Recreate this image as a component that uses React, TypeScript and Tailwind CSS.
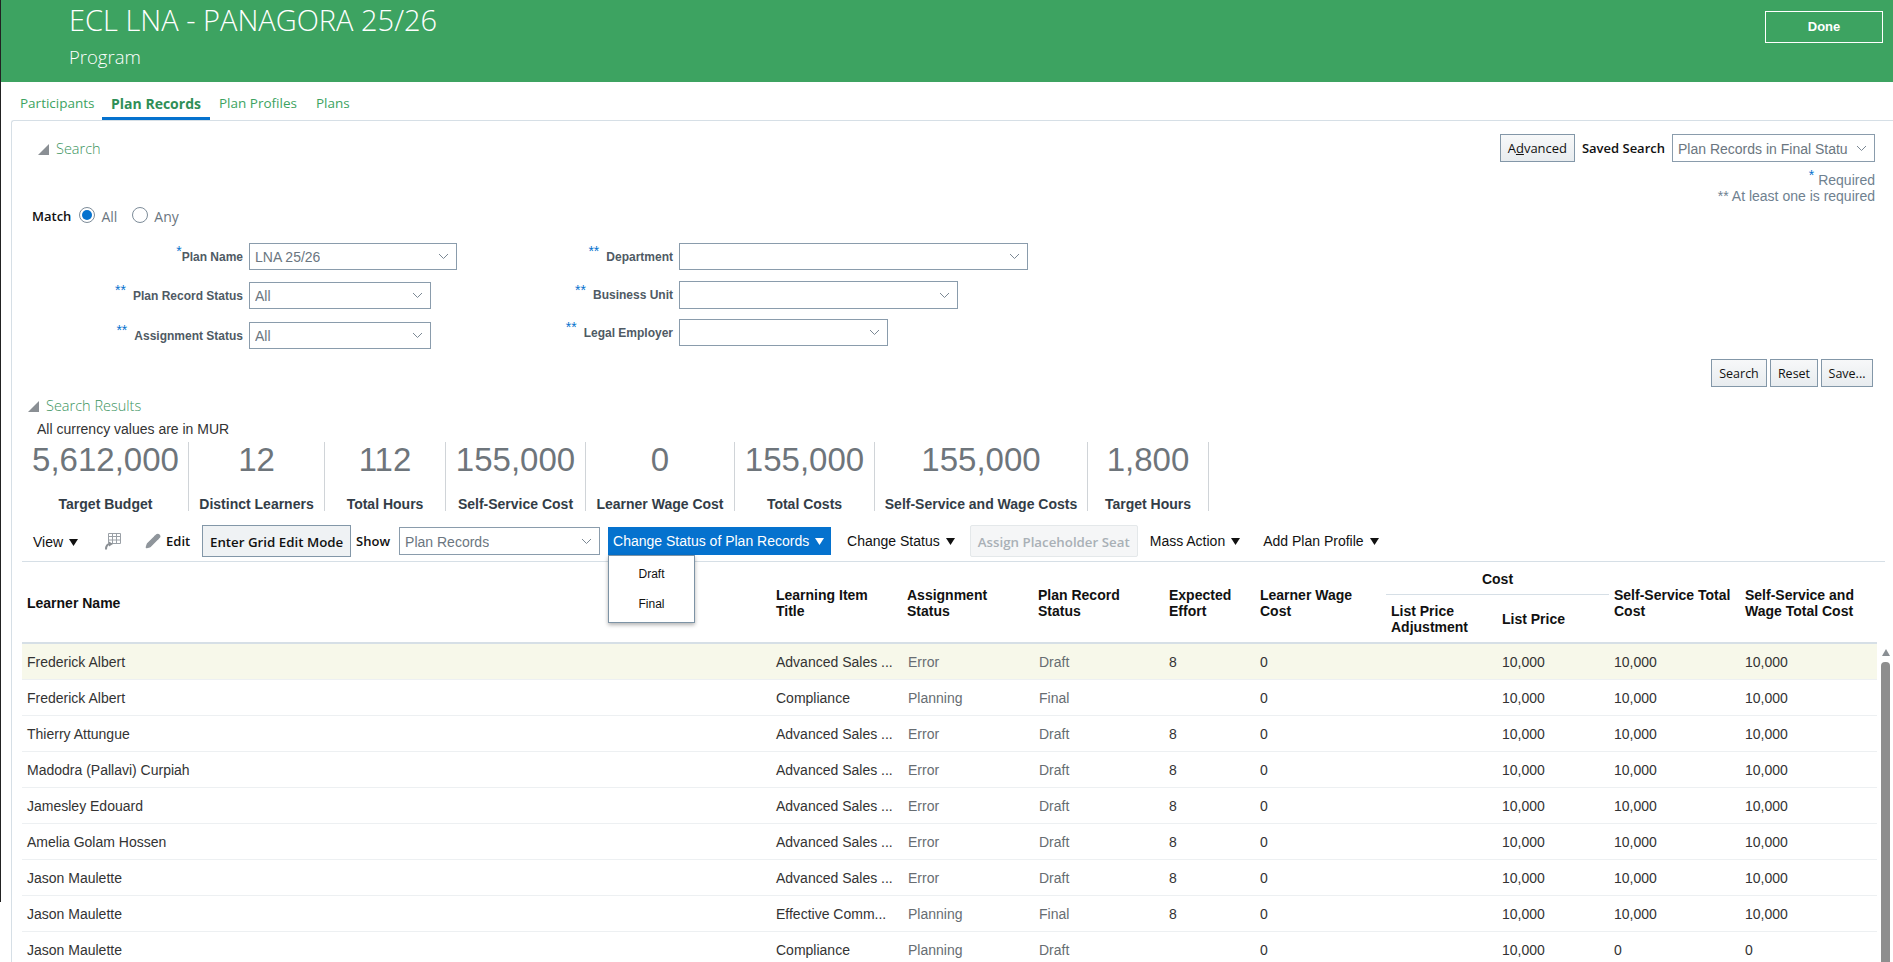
import { Pencil } from 'lucide-react';

type Row = {
  name: string;
  item: string;
  assign: string;
  status: string;
  effort: string;
  selfCost: string;
  wageCost: string;
};

const sales = 'Advanced Sales ...';

const rows: Row[] = [
  { name: 'Frederick Albert', item: sales, assign: 'Error', status: 'Draft', effort: '8', selfCost: '10,000', wageCost: '10,000' },
  { name: 'Frederick Albert', item: 'Compliance', assign: 'Planning', status: 'Final', effort: '', selfCost: '10,000', wageCost: '10,000' },
  { name: 'Thierry Attungue', item: sales, assign: 'Error', status: 'Draft', effort: '8', selfCost: '10,000', wageCost: '10,000' },
  { name: 'Madodra (Pallavi) Curpiah', item: sales, assign: 'Error', status: 'Draft', effort: '8', selfCost: '10,000', wageCost: '10,000' },
  { name: 'Jamesley Edouard', item: sales, assign: 'Error', status: 'Draft', effort: '8', selfCost: '10,000', wageCost: '10,000' },
  { name: 'Amelia Golam Hossen', item: sales, assign: 'Error', status: 'Draft', effort: '8', selfCost: '10,000', wageCost: '10,000' },
  { name: 'Jason Maulette', item: sales, assign: 'Error', status: 'Draft', effort: '8', selfCost: '10,000', wageCost: '10,000' },
  { name: 'Jason Maulette', item: 'Effective Comm...', assign: 'Planning', status: 'Final', effort: '8', selfCost: '10,000', wageCost: '10,000' },
  { name: 'Jason Maulette', item: 'Compliance', assign: 'Planning', status: 'Draft', effort: '', selfCost: '0', wageCost: '0' },
];

const metrics = [
  { value: '5,612,000', label: 'Target Budget', width: 'w-[166px]' },
  { value: '12', label: 'Distinct Learners', width: 'w-[136px]' },
  { value: '112', label: 'Total Hours', width: 'w-[121px]' },
  { value: '155,000', label: 'Self-Service Cost', width: 'w-[140px]' },
  { value: '0', label: 'Learner Wage Cost', width: 'w-[149px]' },
  { value: '155,000', label: 'Total Costs', width: 'w-[140px]' },
  { value: '155,000', label: 'Self-Service and Wage Costs', width: 'w-[213px]' },
  { value: '1,800', label: 'Target Hours', width: 'w-[121px]' },
];

function Chevron() {
  return (
    <svg width="11" height="7" viewBox="0 0 11 7" className="shrink-0" fill="none" stroke="#7b8894" strokeWidth="1">
      <path d="M1 1l4.5 4.5L10 1" />
    </svg>
  );
}

function Caret({ color = '#111' }: { color?: string }) {
  return (
    <svg width="9" height="7" viewBox="0 0 9 7" className="ml-[6px] shrink-0">
      <path d="M0 0h9L4.5 7z" fill={color} />
    </svg>
  );
}

function Disclosure() {
  return (
    <svg width="11" height="11" viewBox="0 0 11 11" className="shrink-0">
      <path d="M11 0v11H0z" fill="#8a8f94" />
    </svg>
  );
}

function Select({ value, width, height = 'h-[28px]' }: { value: string; width: string; height?: string }) {
  return (
    <div className={`flex ${width} ${height} shrink-0 items-center justify-between border border-[#8a9cac] bg-white pl-[5px] pr-[7px] text-[14px] text-[#6b7680]`}>
      <span className="mr-[8px] overflow-hidden whitespace-nowrap pt-[2px]">{value}</span>
      <Chevron />
    </div>
  );
}

function Marks({ count }: { count: 1 | 2 }) {
  return <span className="relative top-[-5px] text-[14px] font-normal text-[#0572ce]">{count === 1 ? '*' : '**'}</span>;
}

function FormRow({ label, marks, gap, children, className }: { label: string; marks: 1 | 2; gap: string; children: React.ReactNode; className: string }) {
  return (
    <div className={`flex items-center justify-end ${className}`}>
      <Marks count={marks} />
      <span className={`${gap} whitespace-nowrap text-[12px] font-bold text-[#4f5a64]`}>{label}</span>
      <span className="w-[6px] shrink-0" />
      {children}
    </div>
  );
}

function GreyButton({ children, className = '' }: { children: React.ReactNode; className?: string }) {
  return (
    <button className={`flex h-[28px] items-center justify-center border border-[#8397a8] bg-gradient-to-b from-[#f7f8f9] to-[#e8ecef] pt-[2px] text-[#111] ${className}`}>
      {children}
    </button>
  );
}

function GridIcon() {
  return (
    <svg width="16" height="17" viewBox="0 0 16 17" fill="none" stroke="#9aa0a6" strokeWidth="1" className="shrink-0">
      <path d="M3.5.5h12v10h-12zM3.5 3.500h12M3.500 7h12M7.500.5v10M11.500.5v10" />
      <path d="M1 16.500c0-4 1-5.500 4-5.500" stroke="#8a8f94" strokeWidth="2" />
      <path d="M4 8.500l4 2.500-4 2.500z" fill="#8a8f94" stroke="none" />
    </svg>
  );
}

const th = 'px-[5px] pt-[2px] text-left align-middle text-[14px] leading-[16px] font-bold text-[#111]';
const td = 'px-[5px] pt-[2px] align-middle whitespace-nowrap overflow-hidden';
const tdGrey = 'pl-[6px] pr-[4px] pt-[2px] align-middle whitespace-nowrap overflow-hidden text-[#676d72]';

export default function App() {
  return (
    <div className="relative h-[962px] w-[1893px] overflow-hidden bg-white font-['Liberation_Sans',Arial,sans-serif]">
      <div className="absolute left-0 top-0 h-[902px] w-[1px] bg-[#222]" />

      <header className="flex h-[82px] items-start justify-between bg-[#3da361] pl-[69px] pr-[10px]">
        <div className="font-['Open_Sans',sans-serif] font-light text-white">
          <div className="mt-[1px] text-[29px] leading-[38px]">ECL LNA - PANAGORA 25/26</div>
          <div className="mt-[5px] text-[18.500px] leading-[26px]">Program</div>
        </div>
        <button className="mt-[11px] h-[32px] w-[118px] border border-white text-[13px] font-bold text-white">Done</button>
      </header>

      <nav className="flex h-[38px] items-end pl-[10px] font-['Open_Sans',sans-serif] text-[13.500px] text-[#3da361]">
        <div className="flex h-[30px] w-[92px] items-start pl-[10px] pt-[3px]">Participants</div>
        <div className="flex h-[30px] w-[108px] items-start justify-center border-b-[3px] border-[#0572ce] pt-[3px] text-[14px] font-bold text-[#2f8f57]">Plan Records</div>
        <div className="flex h-[30px] items-start px-[9px] pt-[3px]">Plan Profiles</div>
        <div className="flex h-[30px] items-start px-[10px] pt-[3px]">Plans</div>
      </nav>

      <main className="ml-[11px] h-[842px] rounded-tl-[3px] border-l border-t border-[#d6dfe6]">
        {/* search panel */}
        <section className="relative h-[270px]">
          <div className="flex items-start justify-between pl-[26px] pr-[18px] pt-[13px]">
            <div className="flex items-center gap-[7px] pt-[6px] font-['Open_Sans',sans-serif] text-[14.500px] font-light leading-[18px] text-[#3b9460]">
              <Disclosure />
              Search
            </div>
            <div className="flex flex-col items-end">
              <div className="flex items-center">
                <GreyButton className="w-[75px] font-['Open_Sans',sans-serif] text-[13px]">
                  <span>A<u>d</u>vanced</span>
                </GreyButton>
                <span className="ml-[7px] mr-[7px] whitespace-nowrap pt-[2px] font-['Open_Sans',sans-serif] text-[13px] font-semibold text-[#111]">Saved Search</span>
                <Select value="Plan Records in Final Status" width="w-[203px]" />
              </div>
              <div className="mt-[10px] text-right text-[14px] leading-[16px] text-[#6f8190]">
                <div><Marks count={1} /> Required</div>
                <div><span className="text-[#6f8190]">**</span> At least one is required</div>
              </div>
            </div>
          </div>

          <div className="ml-[20px] mt-[2px] flex items-center font-['Open_Sans',sans-serif] text-[13px]">
            <span className="font-semibold text-[#111]">Match</span>
            <span className="mb-[3px] ml-[8px] flex h-[16px] w-[16px] items-center justify-center rounded-full border border-[#7d8c99]">
              <span className="h-[10px] w-[10px] rounded-full bg-[#0572ce]" />
            </span>
            <span className="ml-[6px] text-[14px] text-[#6b7680]">All</span>
            <span className="mb-[3px] ml-[15px] h-[16px] w-[16px] rounded-full border border-[#7d8c99]" />
            <span className="ml-[6px] text-[14px] text-[#6b7680]">Any</span>
          </div>

          <div className="mt-[16px] flex">
            <div className="flex w-[445px] flex-col">
              <FormRow label="Plan Name" marks={1} gap="ml-0" className="w-[445px]">
                <Select value="LNA 25/26" width="w-[208px]" height="h-[27px]" />
              </FormRow>
              <div className="mt-[12px] flex w-[419px] flex-col gap-[13px]">
                <FormRow label="Plan Record Status" marks={2} gap="ml-[7px]" className="w-[419px]">
                  <Select value="All" width="w-[182px]" height="h-[27px]" />
                </FormRow>
                <FormRow label="Assignment Status" marks={2} gap="ml-[7px]" className="w-[419px]">
                  <Select value="All" width="w-[182px]" height="h-[27px]" />
                </FormRow>
              </div>
            </div>
            <div className="flex flex-col">
              <FormRow label="Department" marks={2} gap="ml-[7px]" className="w-[571px]">
                <Select value="" width="w-[349px]" height="h-[27px]" />
              </FormRow>
              <FormRow label="Business Unit" marks={2} gap="ml-[7px]" className="mt-[11px] w-[501px]">
                <Select value="" width="w-[279px]" />
              </FormRow>
              <FormRow label="Legal Employer" marks={2} gap="ml-[7px]" className="mt-[10px] w-[431px]">
                <Select value="" width="w-[209px]" height="h-[27px]" />
              </FormRow>
            </div>
          </div>

          <div className="absolute bottom-[4px] right-[20px] flex gap-[3px] font-['Open_Sans',sans-serif]">
            <GreyButton className="w-[56px] text-[12.500px]">Search</GreyButton>
            <GreyButton className="w-[48px] text-[12.500px]">Reset</GreyButton>
            <GreyButton className="w-[52px] text-[12.500px]">Save...</GreyButton>
          </div>
        </section>

        {/* results */}
        <section className="pt-[6px]">
          <div className="flex items-center gap-[7px] pl-[16px] font-['Open_Sans',sans-serif] text-[14.500px] font-light leading-[18px] text-[#3b9460]">
            <Disclosure />
            Search Results
          </div>
          <div className="ml-[25px] mt-[6px] text-[14px] leading-[16px] text-[#333]">All currency values are in MUR</div>

          <div className="ml-[11px] mt-[5px] flex h-[69px]">
            {metrics.map((m) => (
              <div key={m.label} className={`${m.width} flex shrink-0 flex-col items-center border-r border-[#d0d4d8]`}>
                <div className="mt-[-2px] text-[33px] leading-[40px] text-[#6e757b]">{m.value}</div>
                <div className="mt-[16px] whitespace-nowrap text-[14px] font-bold leading-[16px] text-[#333d47]">{m.label}</div>
              </div>
            ))}
          </div>

          <div className="relative ml-[10px] mr-[8px] mt-[14px] flex h-[37px] items-start border-b border-[#d6dfe6]">
            <div className="flex h-[32px] items-center pl-[11px] pt-[2px] text-[14px] text-[#111]">
              View
              <Caret />
            </div>
            <div className="ml-[27px] flex h-[32px] items-center"><GridIcon /></div>
            <div className="ml-[24px] flex h-[32px] items-center">
              <Pencil size={16} fill="#8f959b" stroke="#8f959b" />
              <span className="ml-[5px] w-[25px] pt-[1px] font-['Open_Sans',sans-serif] text-[13px] font-semibold text-[#111]">Edit</span>
            </div>
            <button className="ml-[11px] h-[32px] w-[149px] border border-[#8397a8] bg-[#eff2f4] pt-[4px] font-['Open_Sans',sans-serif] text-[13.300px] font-semibold text-[#111]">Enter Grid Edit Mode</button>
            <span className="ml-[5px] flex h-[32px] w-[35px] items-center pt-[2px] font-['Open_Sans',sans-serif] text-[13px] font-semibold text-[#111]">Show</span>
            <div className="ml-[8px] mt-[2px]"><Select value="Plan Records" width="w-[201px]" /></div>
            <div className="ml-[8px] mt-[2px] flex h-[28px] w-[223px] items-center justify-start bg-[#0572ce] pl-[5px] text-[14px] text-white">
              Change Status of Plan Records
              <Caret color="#fff" />
            </div>
            <div className="ml-[16px] flex h-[32px] items-center text-[14px] text-[#111]">
              Change Status
              <Caret />
            </div>
            <button className="ml-[15px] h-[32px] w-[168px] rounded-[2px] border border-[#e4e8ea] bg-[#f5f6f7] pt-[4px] font-['Open_Sans',sans-serif] text-[13.300px] font-semibold text-[#a9b0b6]">Assign Placeholder Seat</button>
            <div className="ml-[12px] flex h-[32px] items-center text-[14px] text-[#111]">
              Mass Action
              <Caret />
            </div>
            <div className="ml-[23px] flex h-[32px] items-center text-[14px] text-[#111]">
              Add Plan Profile
              <Caret />
            </div>

            <div className="absolute left-[586px] top-[30px] z-10 flex h-[68px] w-[87px] flex-col items-center border border-[#7d93a5] bg-white pt-[10px] text-[12px] leading-[16px] text-[#111] shadow-[0_2px_4px_rgba(0,0,0,0.3)]">
              <span>Draft</span>
              <span className="mt-[14px]">Final</span>
            </div>
          </div>

          <div className="relative ml-[10px]">
            <table className="w-[1855px] table-fixed border-collapse">
              <colgroup>
                <col className="w-[749px]" />
                <col className="w-[131px]" />
                <col className="w-[131px]" />
                <col className="w-[131px]" />
                <col className="w-[91px]" />
                <col className="w-[131px]" />
                <col className="w-[111px]" />
                <col className="w-[112px]" />
                <col className="w-[131px]" />
                <col className="w-[137px]" />
              </colgroup>
              <thead>
                <tr className="h-[32px]">
                  <th rowSpan={2} className={th}>Learner Name</th>
                  <th rowSpan={2} className={th}>Learning Item<br />Title</th>
                  <th rowSpan={2} className={th}>Assignment<br />Status</th>
                  <th rowSpan={2} className={th}>Plan Record<br />Status</th>
                  <th rowSpan={2} className={th}>Expected<br />Effort</th>
                  <th rowSpan={2} className={th}>Learner Wage<br />Cost</th>
                  <th colSpan={2} className={`${th} !text-center border-b border-[#d6dfe6]`}>Cost</th>
                  <th rowSpan={2} className={th}>Self-Service Total<br />Cost</th>
                  <th rowSpan={2} className={th}>Self-Service and<br />Wage Total Cost</th>
                </tr>
                <tr className="h-[49px] border-b-2 border-[#d6dfe6]">
                  <th className={th}>List Price<br />Adjustment</th>
                  <th className={th}>List Price</th>
                </tr>
              </thead>
              <tbody>
                {rows.map((r, i) => (
                  <tr key={i} className={`h-[36px] border-b border-[#edf0f2] text-[14px] text-[#333] ${i === 0 ? 'bg-[#f7f8ea]' : ''}`}>
                    <td className={td}>{r.name}</td>
                    <td className={td}>{r.item}</td>
                    <td className={tdGrey}>{r.assign}</td>
                    <td className={tdGrey}>{r.status}</td>
                    <td className={td}>{r.effort}</td>
                    <td className={td}>0</td>
                    <td className={td} />
                    <td className={td}>10,000</td>
                    <td className={td}>{r.selfCost}</td>
                    <td className={td}>{r.wageCost}</td>
                  </tr>
                ))}
              </tbody>
            </table>
            <div className="absolute left-[1859px] top-[87px] flex w-[9px] flex-col items-center">
              <svg width="8" height="7" viewBox="0 0 8 7"><path d="M4 0l4 7H0z" fill="#8a8f94" /></svg>
              <div className="mt-[6px] h-[320px] w-[9px] rounded-t-[4px] bg-[#8e8e8e]" />
            </div>
          </div>
        </section>
      </main>
    </div>
  );
}
